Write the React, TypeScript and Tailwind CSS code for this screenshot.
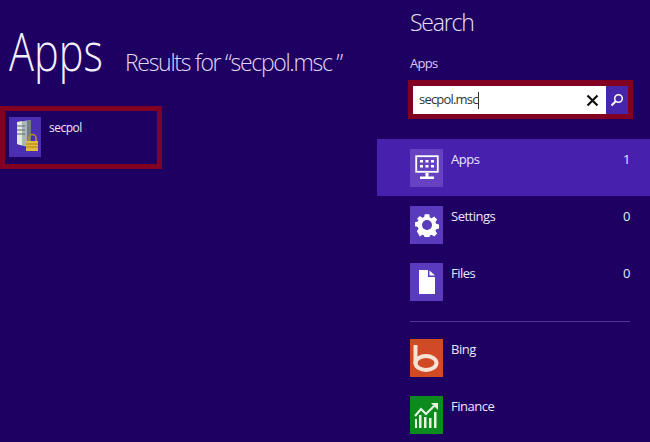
import { ReactNode } from 'react'

function SecpolIcon() {
  return (
    <svg width="32" height="40" viewBox="0 0 32 40">
      <path d="M8 5 L22 3 V31 L8 27 Z" fill="#a9b4b4" />
      <path d="M8 5 L13 4.3 V28.4 L8 27 Z" fill="#dfe6e4" />
      <path d="M8 9 H16 M8 13 H16 M8 17 H16" stroke="#5d6a70" strokeWidth="1" />
      <path d="M18 3.5 L22 3 V31 L18 30 Z" fill="#74807f" />
      <path d="M20 24 V21 a3.5 3.5 0 0 1 7 0 V24" fill="none" stroke="#b88f2c" strokeWidth="1.6" />
      <rect x="17" y="24" width="12" height="10" fill="#e3b93f" />
      <path d="M17 27 H29 M17 30 H29" stroke="#a98420" strokeWidth="1" />
    </svg>
  )
}

function AppsIcon() {
  return (
    <svg width="24" height="26" viewBox="0 0 24 26" fill="none">
      <rect x="1.2" y="1.2" width="21.6" height="15.6" stroke="white" strokeWidth="1.8" />
      <path d="M5 5h3v2.5H5zM10.5 5h3v2.5h-3zM16 5h3v2.5h-3zM5 10h3v2.5H5zM10.5 10h3v2.5h-3zM16 10h3v2.5h-3z" fill="white" />
      <path d="M10.5 18h3v3.5h5.5V24H5v-2.5h5.5z" fill="white" />
    </svg>
  )
}

function GearIcon() {
  return (
    <svg width="24" height="24" viewBox="0 0 24 24">
      <path
        fill="white"
        fillRule="evenodd"
        d="M9.5 0.5h5l.7 3.4 1.9.8 2.9-1.9 3.3 3.4-1.9 2.8.8 2 3.3.7v4.6l-3.3.7-.8 2 1.9 2.8-3.3 3.4-2.9-1.9-1.9.8-.7 3.4h-5l-.7-3.4-1.9-.8-2.9 1.9L.7 19.3l1.9-2.8-.8-2-3.3-.7V9.2l3.3-.7.8-2L.7 5.7 4 2.3l2.9 1.9 1.9-.8z"
        transform="translate(1.2 0.9) scale(0.9)"
      />
      <circle cx="12" cy="12" r="5" fill="#5a3abd" />
    </svg>
  )
}

function FileIcon() {
  return (
    <svg width="16" height="24" viewBox="0 0 16 24">
      <path d="M0 0h9v7h7v17H0z" fill="white" />
      <path d="M10.5 0.5 16 5.5h-5.5z" fill="white" />
    </svg>
  )
}

function BingIcon() {
  return (
    <svg width="33" height="38" viewBox="0 0 33 38" fill="none">
      <path d="M5.500 6V25" stroke="#f6e3d6" strokeWidth="4" />
      <ellipse cx="16" cy="24" rx="10.500" ry="7" stroke="#f6e3d6" strokeWidth="4" />
    </svg>
  )
}

function FinanceIcon() {
  return (
    <svg width="26" height="28" viewBox="0 0 26 28" fill="#e4f4df">
      <path d="M1 27V18h2v9zM5 27V14h2.500v13zM10 27V16h2.500v11zM15 27V17h2.500v10zM20 27V11h2.500v16z" />
      <path d="M1 15 L7 8 L12 13 L21 4" fill="none" stroke="#e4f4df" strokeWidth="2.200" />
      <path d="M17 2h7v7z" />
    </svg>
  )
}

function Row({ icon, tile, label, count, active }: { icon: ReactNode; tile: string; label: string; count?: string; active?: boolean }) {
  return (
    <div className={`flex h-[57px] pl-[33px] pr-5 pt-[10px] ${active ? 'bg-[#4820ae]' : ''}`}>
      <div className={`flex h-[38px] w-[33px] shrink-0 items-center justify-center ${tile}`}>{icon}</div>
      <div className="ml-2 flex h-[21px] flex-1 items-center justify-between text-[13px] tracking-[-0.5px] text-[#ece6fb]">
        <span>{label}</span>
        {count && <span>{count}</span>}
      </div>
    </div>
  )
}

export default function App() {
  return (
    <div className="flex h-[442px] w-[650px] overflow-hidden bg-[#1d0062] font-['Open_Sans',sans-serif] text-white">
      <div className="w-[377px] shrink-0">
        <div className="flex h-[106px] items-start pl-[9px] pt-[14px]">
          <h1 className="w-[116px] origin-left scale-x-[0.77] text-[54px] leading-[72px] font-light text-[#f4effd]">Apps</h1>
          <p className="mt-[30px] whitespace-nowrap text-[23px] leading-[36px] font-light tracking-[-1.3px] text-[#e2d8f8]">
            Results for “secpol.msc ”
          </p>
        </div>
        <div className="flex h-[63px] w-[162px] border-[5px] border-[#820022] pl-[4px] pt-[6px]">
          <div className="flex h-[40px] w-[32px] items-center justify-center bg-[#4a2fb3]">
            <SecpolIcon />
          </div>
          <span className="ml-[8px] mt-[2px] text-[12px] leading-[18px] tracking-[-0.5px] text-[#ece6fb]">secpol</span>
        </div>
      </div>

      <div className="flex-1">
        <div className="pl-[33px] pt-[6px]">
          <h2 className="text-[23px] leading-[32px] font-light tracking-[-1.2px] text-[#e8e0fa]">Search</h2>
          <p className="mt-[15px] text-[13px] leading-[20px] tracking-[-0.7px] text-[#d8ccf4]">Apps</p>
        </div>
        <div className="ml-[31px] mt-[7px] flex h-[39px] w-[225px] border-x-[5px] border-b-[5px] border-t-[6px] border-[#820022] bg-white">
          <div className="flex flex-1 items-center pl-[6px] text-[13px] tracking-[-0.8px] text-[#333]">
            <span>secpol.msc</span>
            <span className="h-[17px] w-px bg-[#333]" />
          </div>
          <div className="flex w-[28px] items-center justify-center">
            <svg width="13" height="13" viewBox="0 0 13 13">
              <path d="M1.500 1.500 L11.500 11.500 M11.500 1.500 L1.500 11.500" stroke="#111" strokeWidth="2.200" />
            </svg>
          </div>
          <div className="flex w-[22px] items-center justify-center bg-[#4626ad]">
            <svg width="14" height="14" viewBox="0 0 14 14" fill="none" stroke="white">
              <circle cx="8.500" cy="5.500" r="3.800" strokeWidth="1.500" />
              <path d="M5.500 8.500 L1.500 12.500" strokeWidth="2" />
            </svg>
          </div>
        </div>
        <div className="mt-[20px]">
          <Row active icon={<AppsIcon />} tile="bg-[#6642c2]" label="Apps" count="1" />
          <Row icon={<GearIcon />} tile="bg-[#5a3abd]" label="Settings" count="0" />
          <Row icon={<FileIcon />} tile="bg-[#5a3abd]" label="Files" count="0" />
        </div>
        <div className="ml-[33px] mr-[20px] mt-[11px] h-px bg-[#4f3596]" />
        <div className="mt-[7px]">
          <Row icon={<BingIcon />} tile="bg-[#d14a26]" label="Bing" />
          <Row icon={<FinanceIcon />} tile="bg-[#0d8a1e]" label="Finance" />
        </div>
      </div>
    </div>
  )
}
